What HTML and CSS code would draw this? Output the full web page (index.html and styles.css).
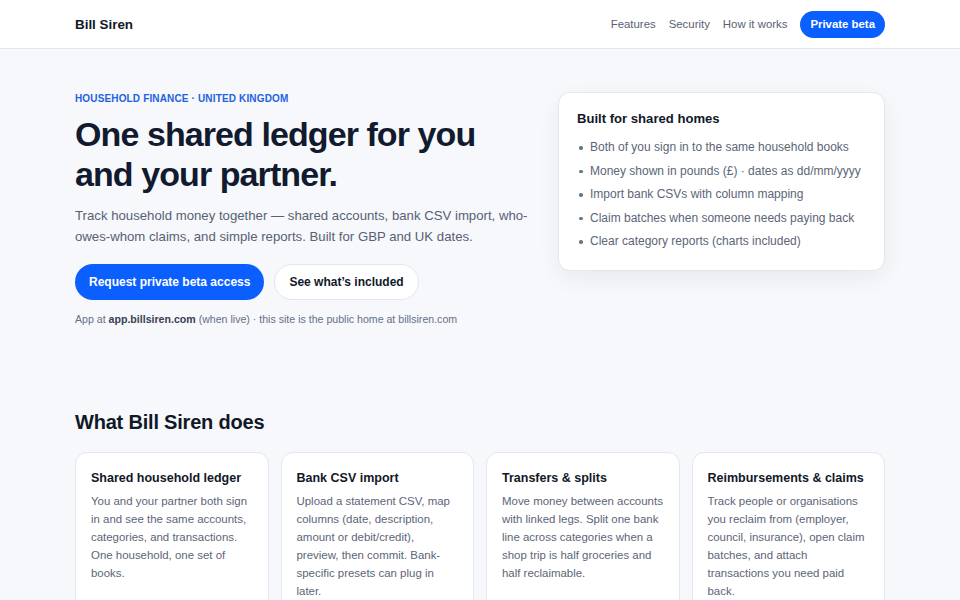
FILE: index.html
```html
<!DOCTYPE html>
<html lang="en">
<head>
<meta charset="utf-8">
<title>Bill Siren</title>
<link rel="stylesheet" href="styles.css">
</head>
<body>
<header class="site-header">
  <div class="container header-inner">
    <a class="logo" href="#">Bill Siren</a>
    <nav class="nav">
      <a href="#">Features</a>
      <a href="#">Security</a>
      <a href="#">How it works</a>
      <a class="btn-nav" href="#">Private beta</a>
    </nav>
  </div>
</header>
<main>
  <section class="container hero">
    <div class="hero-copy">
      <p class="eyebrow">Household finance · United Kingdom</p>
      <h1>One shared ledger for you and your partner.</h1>
      <p class="lead">Track household money together — shared accounts, bank CSV import, who-owes-whom claims, and simple reports. Built for GBP and UK dates.</p>
      <div class="actions">
        <a class="btn btn-primary" href="#">Request private beta access</a>
        <a class="btn btn-secondary" href="#">See what’s included</a>
      </div>
      <p class="note">App at <strong>app.billsiren.com</strong> (when live) · this site is the public home at billsiren.com</p>
    </div>
    <aside class="hero-card">
      <h2>Built for shared homes</h2>
      <ul>
        <li>Both of you sign in to the same household books</li>
        <li>Money shown in pounds (£) · dates as dd/mm/yyyy</li>
        <li>Import bank CSVs with column mapping</li>
        <li>Claim batches when someone needs paying back</li>
        <li>Clear category reports (charts included)</li>
      </ul>
    </aside>
  </section>
  <section class="container features">
    <h2>What Bill Siren does</h2>
    <div class="feature-grid">
      <article class="feature">
        <h3>Shared household ledger</h3>
        <p>You and your partner both sign in and see the same accounts, categories, and transactions. One household, one set of books.</p>
      </article>
      <article class="feature">
        <h3>Bank CSV import</h3>
        <p>Upload a statement CSV, map columns (date, description, amount or debit/credit), preview, then commit. Bank-specific presets can plug in later.</p>
      </article>
      <article class="feature">
        <h3>Transfers &amp; splits</h3>
        <p>Move money between accounts with linked legs. Split one bank line across categories when a shop trip is half groceries and half reclaimable.</p>
      </article>
      <article class="feature">
        <h3>Reimbursements &amp; claims</h3>
        <p>Track people or organisations you reclaim from (employer, council, insurance), open claim batches, and attach transactions you need paid back.</p>
      </article>
    </div>
  </section>
</main>
</body>
</html>
```
FILE: styles.css
```css
* { box-sizing: border-box; }
html, body { margin: 0; padding: 0; }
body {
  font-family: "Liberation Sans", Arial, sans-serif;
  background: #f6f8fb;
  color: #0f172a;
}
a { text-decoration: none; color: inherit; }
.container {
  max-width: 810px;
  margin: 0 auto;
}
.site-header {
  background: #ffffff;
  border-bottom: 1px solid #e3e7ee;
}
.header-inner {
  height: 48px;
  display: flex;
  align-items: center;
  justify-content: space-between;
}
.logo {
  font-size: 13.4px;
  font-weight: 700;
  color: #111827;
}
.nav {
  display: flex;
  align-items: center;
  gap: 13px;
  font-size: 11.4px;
  color: #586170;
}
.btn-nav {
  display: inline-flex;
  align-items: center;
  height: 27px;
  background: #0b5fff;
  color: #ffffff;
  font-weight: 700;
  padding: 0 10px;
  border-radius: 999px;
}
.hero {
  display: grid;
  grid-template-columns: 1fr 327px;
  gap: 28px;
  align-items: start;
  padding-top: 43px;
}
.eyebrow {
  margin: 0;
  font-size: 10px;
  line-height: 14px;
  font-weight: 700;
  letter-spacing: 0.015em;
  text-transform: uppercase;
  color: #1f62e0;
}
h1 {
  margin: 8px 0 0;
  font-size: 34px;
  line-height: 40px;
  font-weight: 700;
  letter-spacing: -0.027em;
  color: #111a2e;
}
.lead {
  margin: 10.5px 0 0;
  font-size: 13.2px;
  line-height: 21px;
  color: #566173;
}
.actions {
  display: flex;
  gap: 10px;
  margin-top: 17px;
}
.btn {
  display: inline-flex;
  align-items: center;
  height: 36px;
  padding: 0 14px;
  border-radius: 999px;
  font-size: 12px;
  font-weight: 700;
}
.btn-primary {
  background: #0b5fff;
  color: #ffffff;
}
.btn-secondary {
  background: #ffffff;
  color: #111827;
  border: 1px solid #e2e6ed;
}
.note {
  margin: 12.5px 0 0;
  font-size: 10.6px;
  line-height: 15px;
  color: #64708a;
}
.note strong { color: #374151; }
.hero-card {
  background: #ffffff;
  border: 1px solid #e3e7ee;
  border-radius: 12px;
  box-shadow: 0 8px 24px rgba(15, 23, 42, 0.06);
  padding: 17px 18px 20px;
}
.hero-card h2 {
  margin: 0;
  font-size: 13.1px;
  line-height: 18px;
  font-weight: 700;
  color: #111827;
}
.hero-card ul {
  list-style: none;
  margin: 10px 0 0;
  padding: 0;
  display: flex;
  flex-direction: column;
  gap: 5.5px;
}
.hero-card li {
  position: relative;
  padding-left: 13px;
  font-size: 12px;
  line-height: 18px;
  color: #5b6577;
}
.hero-card li::before {
  content: "";
  position: absolute;
  left: 2px;
  top: 8px;
  width: 3.5px;
  height: 3.5px;
  border-radius: 50%;
  background: #6b7280;
}
.features {
  padding-top: 83px;
}
.features h2 {
  margin: 0;
  font-size: 20px;
  line-height: 24px;
  font-weight: 700;
  letter-spacing: -0.01em;
  color: #111827;
}
.feature-grid {
  display: grid;
  grid-template-columns: repeat(4, 1fr);
  gap: 12px;
  margin-top: 18px;
}
.feature {
  background: #ffffff;
  border: 1px solid #e3e7ee;
  border-radius: 12px;
  padding: 16px 15px 20px;
  min-height: 170px;
}
.feature h3 {
  margin: 0;
  font-size: 12.5px;
  line-height: 18px;
  font-weight: 700;
  color: #111827;
}
.feature p {
  margin: 5px 0 0;
  font-size: 11.45px;
  line-height: 18px;
  color: #5b6577;
}
```
